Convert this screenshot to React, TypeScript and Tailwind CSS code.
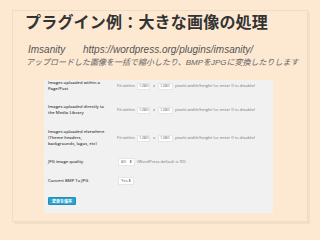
export default function App() {
  const rows = [
    { label: ["Images uploaded within a", "Page/Post"], mt: "mt-[3px]" },
    { label: ["Images uploaded directly to", "the Media Library"], mt: "mt-[12px]" },
    { label: ["Images uploaded elsewhere", "(Theme headers,", "backgrounds, logos, etc)"], mt: "mt-[13px]" },
  ];

  return (
    <div className="w-[320px] h-[240px] bg-[#fde9d2] pt-[10px] px-[12px] font-['Liberation_Sans','Noto_Sans_CJK_JP',sans-serif]">
      <div className="h-[212px] border border-[#efdcc3] shadow-[2px_2px_0_#f1dfc8] pl-[11px] pt-[2px]">
        {/* Title */}
        <h1 className="ml-[1px] text-[16px] leading-[20px] font-bold tracking-[0.2px] text-[#333] whitespace-nowrap">
          プラグイン例：大きな画像の処理
        </h1>

        <div className="mt-[11px] ml-[4px] flex text-[10px] leading-[12px] italic text-[#555] whitespace-nowrap">
          <span className="w-[55px]">Imsanity</span>
          <span>https://wordpress.org/plugins/imsanity/</span>
        </div>
        <div className="mt-[2px] ml-[2px] text-[8px] leading-[10px] italic text-[#666] whitespace-nowrap">
          アップロードした画像を一括で縮小したり、BMPをJPGに変換したりします
        </div>

        {/* Settings screenshot */}
        <div className="mt-[12px] ml-[20px] w-[229px] h-[133px] bg-[#f1f1f1] pl-[4px] font-['Open_Sans',sans-serif] text-[4.2px] text-[#777]">
          {rows.map((r, i) => (
            <div key={i} className={`${r.mt} flex items-center`}>
              <div className="w-[69px] leading-[6px] font-semibold text-[#444]">
                {r.label.map((l) => (
                  <div key={l} className="whitespace-nowrap">{l}</div>
                ))}
              </div>
              <div className="flex items-center whitespace-nowrap">
                <span className="w-[20px]">Fit within</span>
                <span className="w-[13px] h-[7px] bg-white border border-[#e6e6e6] flex items-center pl-[1px] text-[#666]">1280</span>
                <span className="w-[8px] text-center">x</span>
                <span className="w-[15px] h-[7px] bg-white border border-[#e6e6e6] flex items-center pl-[1px] text-[#666]">1280</span>
                <span className="ml-[2px]">pixels width/height (or enter 0 to disable)</span>
              </div>
            </div>
          ))}

          <div className="mt-[11px] flex items-center">
            <div className="w-[70px] leading-[6px] font-semibold text-[#444] whitespace-nowrap">JPG image quality</div>
            <span className="w-[17px] h-[8px] bg-white border border-[#e6e6e6] flex items-center justify-between px-[2px] text-[#666]">
              <span>80</span>
              <span className="text-[4px]">⬍</span>
            </span>
            <span className="ml-[2px] whitespace-nowrap">(WordPress default is 90)</span>
          </div>

          <div className="mt-[11px] flex items-center">
            <div className="w-[70px] leading-[6px] font-semibold text-[#444] whitespace-nowrap">Convert BMP To JPG</div>
            <span className="w-[16px] h-[8px] bg-white border border-[#e6e6e6] flex items-center justify-between px-[2px] text-[#666]">
              <span>Yes</span>
              <span className="text-[4px]">⬍</span>
            </span>
          </div>

          <button className="mt-[12px] w-[28px] h-[8px] bg-[#2ea2cc] border border-[#1b8fbb] rounded-[1px] text-white text-[4px] font-bold leading-none flex items-center justify-center font-['Noto_Sans_CJK_JP',sans-serif]">
            変更を保存
          </button>
        </div>
      </div>
    </div>
  );
}
